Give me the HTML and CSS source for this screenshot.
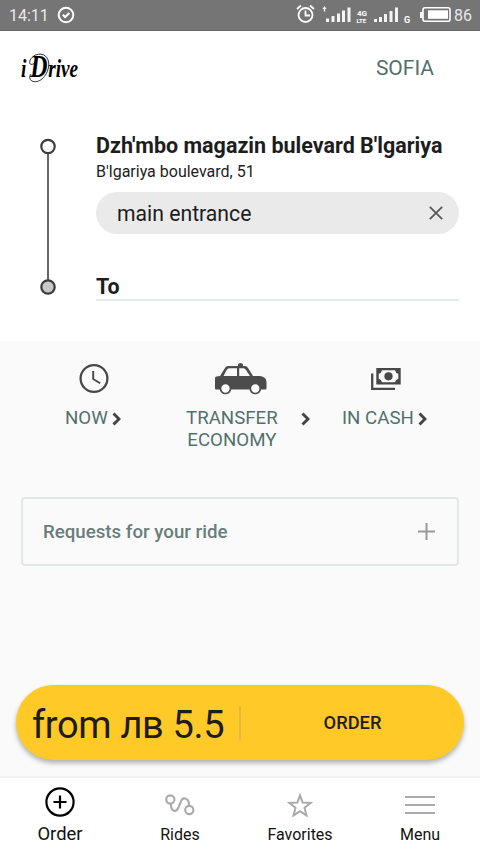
FILE: index.html
```html
<!DOCTYPE html>
<html lang="en">
<head>
<meta charset="utf-8">
<title>iDrive</title>
<link rel="stylesheet" href="styles.css">
</head>
<body>
<div class="status">
  <span class="time">14:11</span>
  <svg class="check" width="18" height="18" viewBox="0 0 18 18"><circle cx="9" cy="9" r="7.3" fill="none" stroke="#fff" stroke-width="2"/><path d="M5.8 8.7l2.3 2.3 4.2-4" fill="none" stroke="#fff" stroke-width="2.1"/></svg>
  <svg class="signals" width="158" height="24" viewBox="296 3 158 24">
    <g fill="none" stroke="#fff" stroke-width="1.8"><circle cx="305.5" cy="15" r="7"/><path d="M305.5 10.5v5h4.5M297 9l4-3.5M314 9l-4-3.5"/></g>
    <g fill="#f4f4f4"><path d="M322.500 9l2-3 2 3h-1.300v2.500h-1.400V9zM326 18.500h3V22h-3zM331.500 16h3v6h-3zM337 13.500h3V22h-3zM342 10.500h3V22h-3zM347.500 7.500h3V22h-3zM374 19h3v3h-3zM379 17h3v5h-3zM384 14h3v8h-3zM389.500 11h3v11h-3zM395 7.500h3V22h-3zM420 12h3v6h-3z"/></g>
    <text class="tiny" x="357" y="15.500">4G</text><text class="tiny lte" x="356.500" y="22.500">LTE</text><text class="tiny g" x="404" y="23">G</text>
    <rect x="423" y="7.800" width="27" height="13.500" rx="2" fill="none" stroke="#fff" stroke-width="1.600"/><rect x="428" y="10.300" width="20" height="8.500" fill="#fff"/>
  </svg>
  <span class="percent">86</span>
</div>
<header class="header">
  <div class="logo"><span>i</span><span class="logo-d">D</span><span>rive</span>
    <svg class="flourish" width="38" height="34" viewBox="0 0 38 34"><path d="M17 10C6 17 5 7 16 3C26 0 34 5 33 14C31 25 20 32 11 29Q6 26 10 22" fill="none" stroke="#111" stroke-width="1"/></svg>
  </div>
  <a class="city">SOFIA</a>
</header>
<section class="route">
  <svg class="track" width="18" height="158" viewBox="0 0 18 158"><path d="M9 9v140" stroke="#666" stroke-width="2"/><circle cx="9" cy="8.500" r="6.700" fill="#fff" stroke="#3c3c3c" stroke-width="2.200"/><circle cx="9" cy="149" r="6.700" fill="#c8c8c8" stroke="#3c3c3c" stroke-width="2.200"/></svg>
  <div class="stops">
    <div class="place">Dzh'mbo magazin bulevard B'lgariya</div>
    <div class="address">B'lgariya boulevard, 51</div>
    <div class="entrance"><span>main entrance</span><svg width="14" height="14" viewBox="0 0 14 14"><path d="M.800.800l12.400 12.400M13.200.800L.800 13.200" stroke="#555" stroke-width="1.700"/></svg></div>
    <div class="to">To</div>
  </div>
</section>
<main class="main">
  <div class="options">
    <div class="option now">
      <svg class="icon" width="30" height="32" viewBox="0 0 30 32"><circle cx="15" cy="15.500" r="13.400" fill="none" stroke="#484848" stroke-width="2.300"/><path d="M14.200 8v8l7 4.200" fill="none" stroke="#484848" stroke-width="1.900"/></svg>
      <div class="label"><span>NOW</span><svg class="chev" width="9" height="14" viewBox="0 0 9 14"><path d="M1.500 1.500L7 7l-5.500 5.500" fill="none" stroke="#444" stroke-width="2.900"/></svg></div>
    </div>
    <div class="option transfer">
      <svg class="icon" width="52" height="32" viewBox="0 0 52 32"><path fill="#4c4c4c" fill-rule="evenodd" d="M0 15q0-1.500 1.500-1.500L5 13l5-8q1-2 3-2h10V1.500Q23.500 0 25.500 0T28 1.500V3h2q2 0 3 2l5 8h7q6.500 1 6.500 6v6.500q0 1-1.500 1H1q-1 0-1-1zM8.500 13H22V5.200h-7.500q-2 0-3 2zM24.200 5.200V13H35l-4-6q-1-1.800-2.500-1.800z"/><g fill="#fff" stroke="#4c4c4c" stroke-width="1.700"><circle cx="10.500" cy="25.500" r="5"/><circle cx="40.300" cy="25.500" r="5"/></g></svg>
      <div class="label"><span>TRANSFER<br>ECONOMY</span><svg class="chev" width="9" height="14" viewBox="0 0 9 14"><path d="M1.500 1.500L7 7l-5.500 5.500" fill="none" stroke="#444" stroke-width="2.900"/></svg></div>
    </div>
    <div class="option cash">
      <svg class="icon" width="30" height="32" viewBox="0 0 30 32"><path d="M1.200 10.500v15.300H24" fill="none" stroke="#484848" stroke-width="2.300"/><path fill="#484848" fill-rule="evenodd" d="M5.300 5H29.700v16.500H5.300zM11 7.300q-.5 3-3.300 3.500v5q2.800.5 3.300 3.500h13q.5-3 3.300-3.500v-5q-2.800-.5-3.300-3.500z"/><circle cx="17.500" cy="13.300" r="4.100" fill="#484848"/></svg>
      <div class="label"><span>IN CASH</span><svg class="chev" width="9" height="14" viewBox="0 0 9 14"><path d="M1.500 1.500L7 7l-5.500 5.500" fill="none" stroke="#444" stroke-width="2.900"/></svg></div>
    </div>
  </div>
  <div class="requests"><span>Requests for your ride</span><svg width="17" height="17" viewBox="0 0 17 17"><path d="M8.500 0v17M0 8.500h17" stroke="#999" stroke-width="2"/></svg></div>
  <div class="order"><div class="price">from лв 5.5</div><div class="action">ORDER</div></div>
</main>
<nav class="nav">
  <div class="tab active"><svg width="30" height="30" viewBox="0 0 30 30"><circle cx="15" cy="15" r="13.600" fill="none" stroke="#000" stroke-width="2.200"/><path d="M15 8.500v13M8.500 15h13" stroke="#000" stroke-width="2.200"/></svg><span>Order</span></div>
  <div class="tab"><svg width="30" height="24" viewBox="0 0 30 24"><g fill="none" stroke="#aaa" stroke-width="2.100"><circle cx="5.300" cy="6.500" r="4.100"/><circle cx="24.300" cy="17" r="4.100"/><path d="M5.800 10.800C6 19 11 20 13.500 14.500S16 4.500 20.500 5.500Q24 6.500 24 12.500"/></g></svg><span>Rides</span></div>
  <div class="tab"><svg width="30" height="24" viewBox="0 0 30 24"><path d="M15 2.300l2.700 7.200 8 .4-6.200 4.900 2 7.700-6.500-4.300-6.500 4.300 2-7.700-6.200-4.900 8-.4z" fill="none" stroke="#aaa" stroke-width="2"/></svg><span>Favorites</span></div>
  <div class="tab"><svg width="30" height="24" viewBox="0 0 30 24"><path d="M0 4h30M0 12h30M0 20h30" stroke="#aaa" stroke-width="2"/></svg><span>Menu</span></div>
</nav>
</body>
</html>
```
FILE: styles.css
```css
* { box-sizing: border-box; }
body { margin: 0; width: 480px; height: 853px; overflow: hidden; display: flex; flex-direction: column; font-family: Roboto, sans-serif; color: #1d1d1d; background: #fff; }
svg { display: block; flex: none; }
.status { height: 31px; background: #757575; border-bottom: 1px solid #696969; display: flex; align-items: center; padding: 0 9px; color: #e9e9e9; font-size: 16px; flex: none; }
.time { width: 48px; }
.signals { margin-left: auto; }
.percent { width: 17px; white-space: nowrap; }
.tiny { font-size: 8px; font-weight: 700; fill: #fff; }
.lte { font-size: 6px; }
.g { font-size: 9px; }
.header { height: 101px; display: flex; justify-content: space-between; padding: 21px 45px 0 21px; flex: none; }
.logo { position: relative; height: 34px; font: italic bold 25px/30px "Liberation Serif", serif; color: #000; transform: scaleX(.77); transform-origin: left; display: flex; align-items: baseline; }
.logo-d { font-size: 31px; margin: 0 1px 0 5px; }
.flourish { position: absolute; left: 3px; top: 0; }
.city { font-size: 21px; line-height: 32px; color: #51706c; margin-right: 1px; }
.route { height: 209px; display: flex; padding: 0 21px 0 39px; flex: none; }
.track { margin-top: 6px; }
.stops { margin-left: 39px; flex: 1; }
.place { font-weight: 700; font-size: 21.5px; line-height: 28px; white-space: nowrap; }
.address { font-size: 16px; line-height: 22px; margin-top: 1px; }
.entrance { height: 42px; margin-top: 9px; padding: 0 16px 0 21px; border-radius: 21px; background: #eaeaea; display: flex; align-items: center; justify-content: space-between; font-size: 21.2px; }
.to { margin-top: 37px; height: 30px; border-bottom: 2px solid #e3ebeb; font-weight: 700; font-size: 21.400px; line-height: 31px; }
.main { height: 437px; flex: none; background: #fafafa; border-bottom: 2px solid #f1f1f1; padding: 22px 16px 0; }
.options { height: 134px; padding-left: 49px; display: flex; }
.option { display: flex; flex-direction: column; }
.label { margin-top: 12px; display: flex; align-items: flex-start; font-size: 18.7px; line-height: 22px; color: #53716c; text-align: center; white-space: nowrap; }
.chev { margin-top: 5px; }
.now { width: 121px; }
.now .icon { margin-left: 14px; }
.now .chev { margin-left: 4px; }
.transfer { width: 156px; }
.transfer .icon { margin-left: 29px; }
.transfer .chev { margin-left: 23px; }
.cash .icon { margin-left: 29px; }
.cash .chev { margin-left: 4px; }
.requests { height: 69px; margin: 0 5px; border: 2px solid #dfe8e6; border-radius: 4px; display: flex; align-items: center; justify-content: space-between; padding: 0 22px 0 20px; font-size: 18.700px; font-weight: 500; color: #697e79; }
.order { height: 75px; margin-top: 119px; border-radius: 38px; background: #ffca28; box-shadow: 0 3px 5px rgba(0,0,0,.3); display: flex; align-items: center; }
.price { width: 225px; height: 34px; padding-left: 16px; border-right: 2px solid #e5b93b; font-size: 38px; letter-spacing: -.35px; line-height: 38px; white-space: nowrap; }
.action { flex: 1; text-align: center; font-size: 18.3px; font-weight: 500; }
.nav { height: 75px; display: flex; flex: none; }
.tab { width: 120px; display: flex; flex-direction: column; align-items: center; font-size: 16px; color: #111; padding-top: 15px; }
.tab span { line-height: 20px; margin-top: 8px; }
.active { font-size: 18.4px; padding-top: 9px; }
.active span { margin-top: 7px; }
```
